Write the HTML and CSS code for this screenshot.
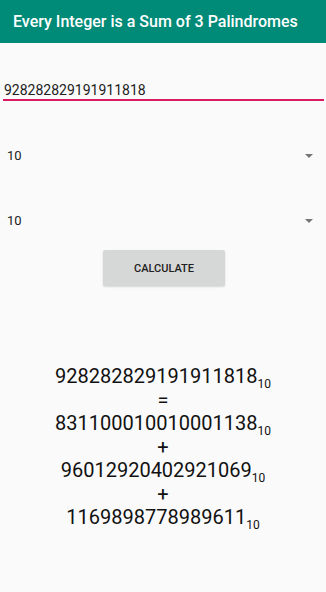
FILE: index.html
```html
<!DOCTYPE html>
<html lang="en">
<head>
    <meta charset="UTF-8">
    <meta name="viewport" content="width=device-width, initial-scale=1.0">
    <title>Every Integer is a Sum of 3 Palindromes</title>
    <link rel="stylesheet" href="styles.css">
</head>
<body>
    <div class="toolbar">Every Integer is a Sum of 3 Palindromes</div>

    <div class="content">
        <div class="number-input">928282829191911818</div>

        <div class="spinner first">
            <span>10</span>
            <span class="arrow"></span>
        </div>
        <div class="spinner">
            <span>10</span>
            <span class="arrow"></span>
        </div>

        <div class="button-row">
            <button class="calc-button">CALCULATE</button>
        </div>

        <div class="result">
            <div>928282829191911818<sub>10</sub></div>
            <div>=</div>
            <div>831100010010001138<sub>10</sub></div>
            <div>+</div>
            <div>96012920402921069<sub>10</sub></div>
            <div>+</div>
            <div>1169898778989611<sub>10</sub></div>
        </div>
    </div>
</body>
</html>
```

FILE: styles.css
```css
body {
    margin: 0;
    font-family: Roboto, "Noto Sans", sans-serif;
    background-color: #fafafa;
    color: #212121;
    width: 326px;
    height: 592px;
    overflow: hidden;
}
.toolbar {
    height: 43px;
    box-sizing: border-box;
    padding: 12px 0 0 13px;
    background-color: #008a78;
    color: white;
    font-size: 16px;
    font-weight: 500;
    white-space: nowrap;
}
.content {
    display: flex;
    flex-direction: column;
}
.number-input {
    margin: 39px 2px 0 3px;
    padding: 0 0 0 1px;
    font-size: 14px;
    line-height: 17px;
    border-bottom: 2px solid #d81b60;
}
.spinner {
    display: flex;
    align-items: center;
    justify-content: space-between;
    height: 65px;
    padding: 0 13px 0 7px;
    font-size: 13px;
}
.spinner.first {
    margin-top: 22px;
}
.arrow {
    width: 0;
    height: 0;
    border-left: 4px solid transparent;
    border-right: 4px solid transparent;
    border-top: 4px solid #757575;
}
.button-row {
    display: flex;
    justify-content: center;
    margin-top: -3px;
}
.calc-button {
    width: 122px;
    height: 36px;
    margin-left: 2px;
    background-color: #d6d7d7;
    color: #212121;
    border: none;
    border-radius: 2px;
    box-shadow: 0 1px 2px rgba(0, 0, 0, 0.15);
    font-family: Roboto, sans-serif;
    font-size: 11px;
    font-weight: 500;
}
.result {
    margin-top: 79px;
    text-align: center;
    font-size: 20px;
    line-height: 23.5px;
    color: #111;
}
.result sub {
    font-size: 12px;
    vertical-align: -5px;
    line-height: 0;
}
```
